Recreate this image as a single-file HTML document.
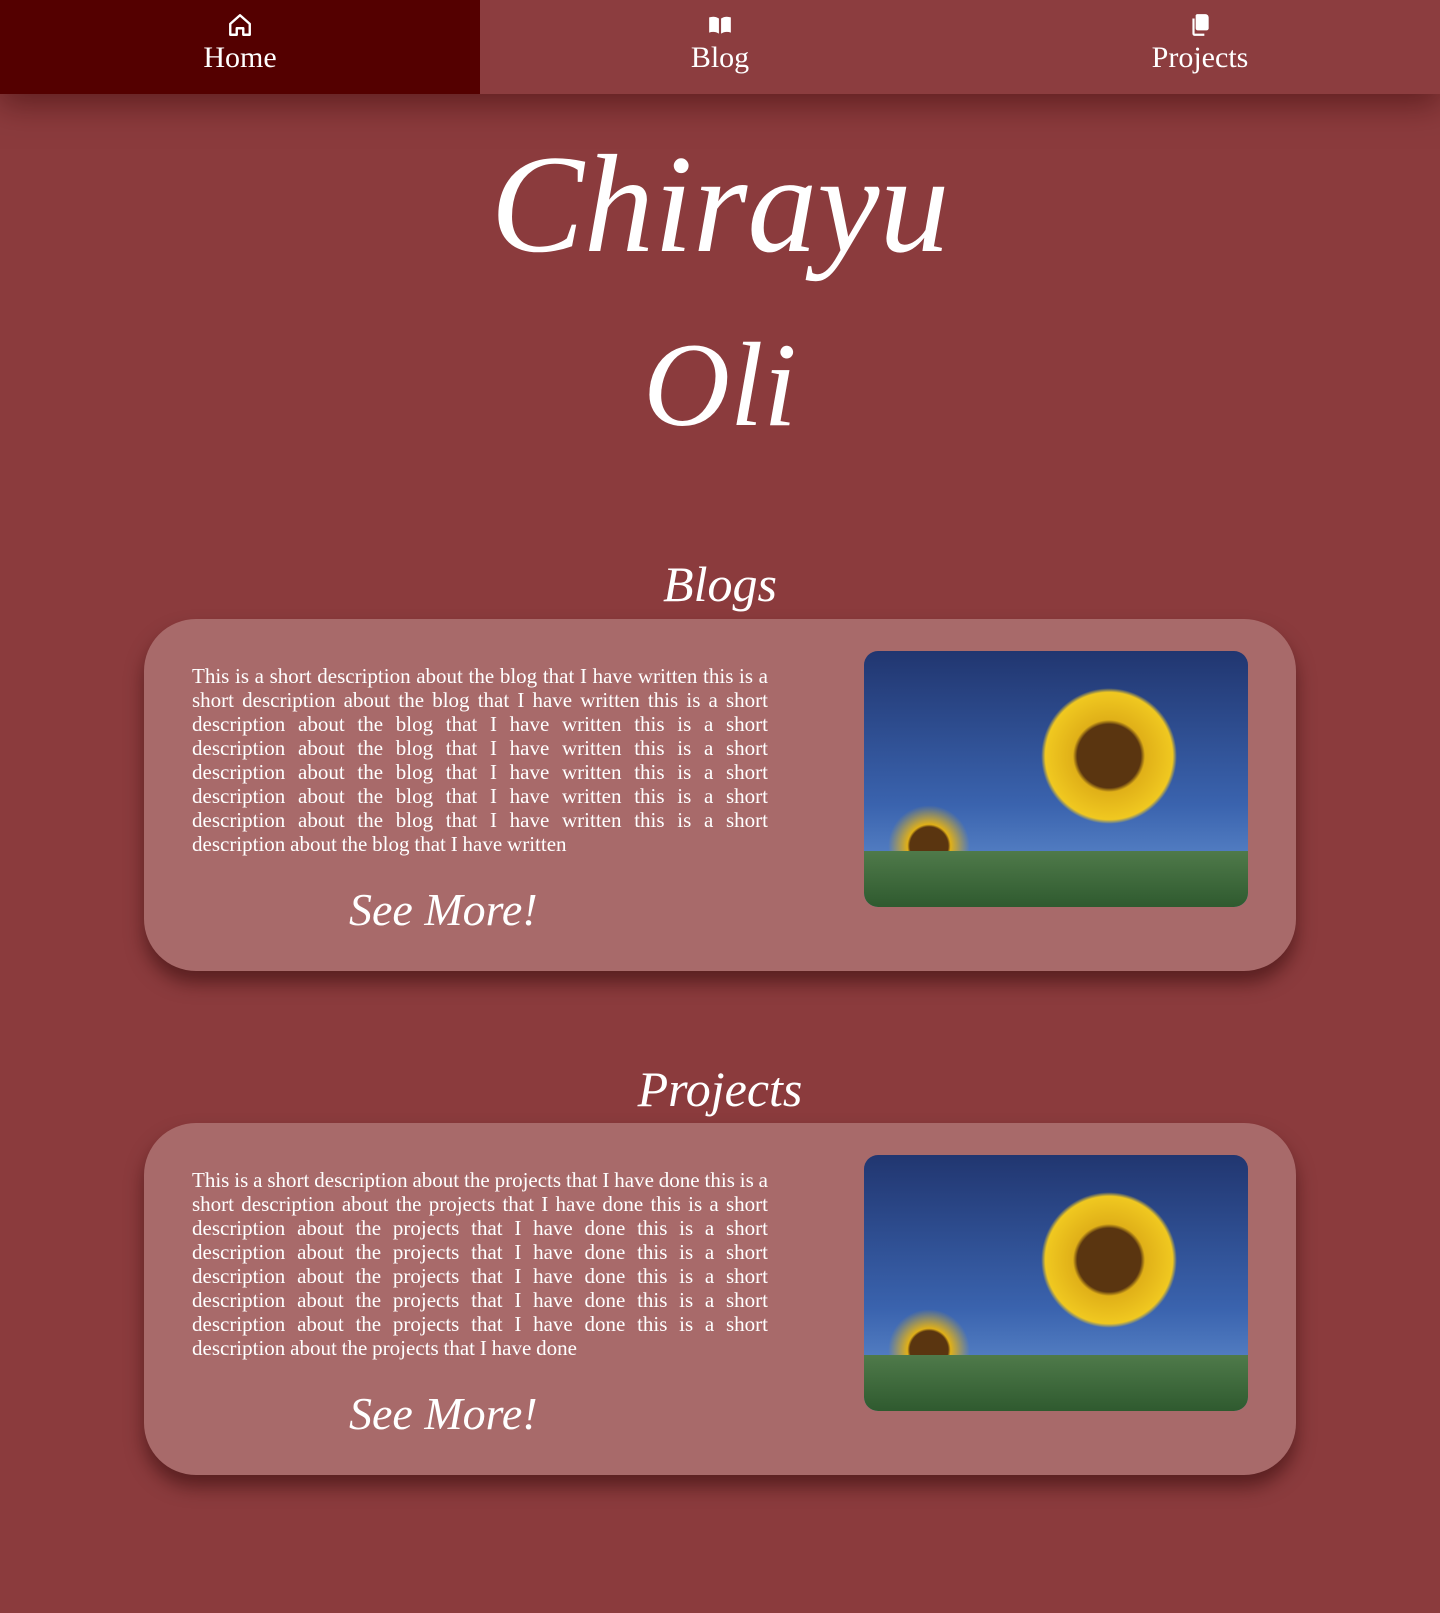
<!DOCTYPE html>
<html><head><meta charset="utf-8"><style>
*{margin:0;padding:0;box-sizing:border-box}
body{width:1440px;height:1613px;background:#8b3b3d;font-family:"Liberation Serif",serif;color:#fff;position:relative;overflow:hidden}
nav{position:absolute;top:0;left:0;width:1440px;height:94px;background:#8c3d3f;display:flex;box-shadow:0 10px 30px rgba(60,10,10,.55);z-index:2}
nav a{flex:1;text-align:center;color:#fff;text-decoration:none;font-size:30px;padding-top:12px}
nav a.act{background:#540000}
nav svg{display:block;margin:0 auto 3px}
.title{position:absolute;left:0;width:1440px;text-align:center;font-family:"Liberation Serif",serif;font-style:italic;color:#fff}
.h2{position:absolute;left:0;width:1440px;text-align:center;font-style:italic;font-size:50px}
.card{position:absolute;left:144px;width:1152px;height:352px;background:#a86a6a;border-radius:52px;box-shadow:0 12px 18px rgba(50,10,10,.55)}
.card p{position:absolute;left:48px;top:45px;width:576px;font-size:21px;line-height:24px;text-align:justify;word-spacing:-0.4px}
.more{position:absolute;left:205px;top:268px;font-size:46px;font-style:italic;line-height:1}
.img{position:absolute;left:720px;top:32px;width:384px;height:256px;border-radius:14px;overflow:hidden;background:linear-gradient(#213670,#3a63ae 60%,#6b98d6)}
.img .f{position:absolute;border-radius:50%}
</style></head><body>
<nav>
<a class="act"><svg width="26" height="26" viewBox="0 0 24 24" fill="none" stroke="#fff" stroke-width="2.2" stroke-linejoin="round"><path d="M3 11L12 3l9 8v10h-6v-6h-6v6H3z"/></svg>Home</a>
<a><svg width="26" height="26" viewBox="0 0 24 24" fill="#fff"><path d="M2 5c3-1 6-1 9 1v14c-3-2-6-2-9-1zM22 5c-3-1-6-1-9 1v14c3-2 6-2 9-1z"/></svg>Blog</a>
<a><svg width="26" height="26" viewBox="0 0 24 24" fill="#fff"><path d="M9 2h8a3 3 0 0 1 3 3v10a2 2 0 0 1-2 2H10a2 2 0 0 1-2-2V3z"/><path d="M5 6v14a2 2 0 0 0 2 2h9v-2H7V6z"/></svg>Projects</a>
</nav>
<div class="title" style="top:130px;font-size:140px;line-height:150px">Chirayu</div>
<div class="title" style="top:320px;font-size:120px;line-height:130px">Oli</div>
<div class="h2" style="top:555px">Blogs</div>
<div class="card" style="top:619px">
<p>This is a short description about the blog that I have written this is a short description about the blog that I have written this is a short description about the blog that I have written this is a short description about the blog that I have written this is a short description about the blog that I have written this is a short description about the blog that I have written this is a short description about the blog that I have written this is a short description about the blog that I have written</p>
<div class="more">See More!</div>
<div class="img"><div class="f" style="left:170px;top:30px;width:150px;height:150px;background:radial-gradient(#5a3510 30%,#e0b018 34%,#f0c820 60%,transparent 64%)"></div><div class="f" style="left:20px;top:150px;width:90px;height:90px;background:radial-gradient(#5a3510 30%,#e0b018 34%,transparent 64%)"></div><div style="position:absolute;left:0;top:200px;width:384px;height:56px;background:linear-gradient(#4f7a4a,#2f5a2f)"></div></div>
</div>
<div class="h2" style="top:1060px">Projects</div>
<div class="card" style="top:1123px">
<p>This is a short description about the projects that I have done this is a short description about the projects that I have done this is a short description about the projects that I have done this is a short description about the projects that I have done this is a short description about the projects that I have done this is a short description about the projects that I have done this is a short description about the projects that I have done this is a short description about the projects that I have done</p>
<div class="more">See More!</div>
<div class="img"><div class="f" style="left:170px;top:30px;width:150px;height:150px;background:radial-gradient(#5a3510 30%,#e0b018 34%,#f0c820 60%,transparent 64%)"></div><div class="f" style="left:20px;top:150px;width:90px;height:90px;background:radial-gradient(#5a3510 30%,#e0b018 34%,transparent 64%)"></div><div style="position:absolute;left:0;top:200px;width:384px;height:56px;background:linear-gradient(#4f7a4a,#2f5a2f)"></div></div>
</div>
</body></html>
